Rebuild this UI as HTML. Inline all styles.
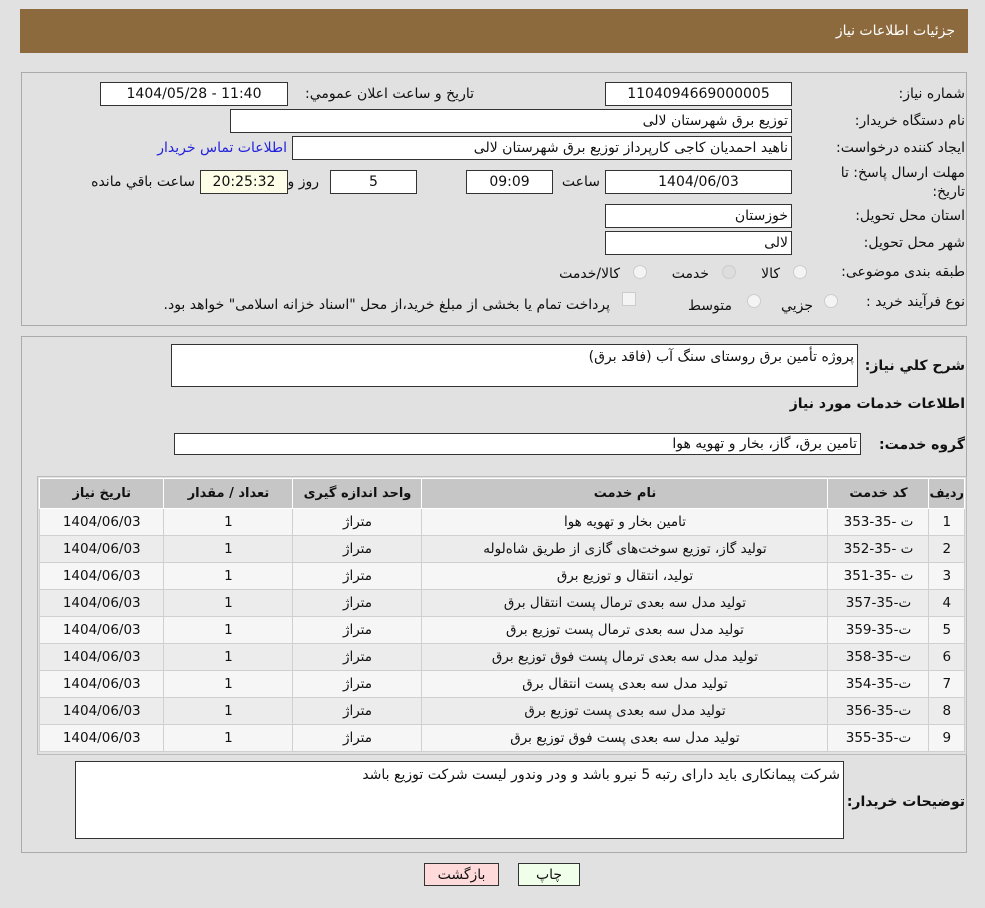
<!DOCTYPE html>
<html><head><meta charset="utf-8"><style>
body{margin:0;width:985px;height:908px;background:#e1e1e1;font-family:"DejaVu Sans","Liberation Sans",sans-serif;font-size:14px;color:#111;position:relative;overflow:hidden}
.a{position:absolute}
.box{position:absolute;background:#fff;border:1px solid #333;box-sizing:border-box;height:24px;line-height:22px;padding:0 3px;white-space:nowrap;overflow:hidden}
.c{text-align:center}.r{text-align:right;direction:rtl}
.lbl{position:absolute;direction:rtl;text-align:right;white-space:nowrap}
.panel{position:absolute;border:1px solid #aaa;box-sizing:border-box}
.rad{position:absolute;width:12px;height:12px;border-radius:50%;border:1px solid #ccc;background:#f4f4f4}
table{position:absolute;left:39px;top:478px;width:926px;border-collapse:collapse;direction:rtl;font-size:13.5px}
td,th{border:1px solid #d0d0d0;text-align:center;height:26px;padding:0}
th{background:#c6c6c6;height:29px;font-weight:bold;border-color:#fff;font-size:13px}
tr:nth-child(even) td{background:#f6f6f6}
tr:nth-child(odd) td{background:#ececec}
</style></head><body>
<div class="a" style="left:20px;top:9px;width:948px;height:44px;background:#8d6a3d;"></div>
<div class="lbl" style="right:30px;top:23px;color:#fff;font-size:14px">جزئیات اطلاعات نیاز</div>

<div class="panel" style="left:21px;top:72px;width:946px;height:254px"></div>
<div class="lbl" style="right:20px;top:86px">شماره نیاز:</div>
<div class="box c" style="left:605px;top:82px;width:187px">1104094669000005</div>
<div class="lbl" style="right:511px;top:86px">تاریخ و ساعت اعلان عمومي:</div>
<div class="box c" style="left:100px;top:82px;width:188px">1404/05/28 - 11:40</div>
<div class="lbl" style="right:20px;top:113px">نام دستگاه خریدار:</div>
<div class="box r" style="left:230px;top:109px;width:562px">توزیع برق شهرستان لالی</div>
<div class="lbl" style="right:20px;top:140px">ایجاد کننده درخواست:</div>
<div class="box r" style="left:292px;top:136px;width:500px">ناهید احمدیان کاجی کارپرداز توزیع برق شهرستان لالی</div>
<div class="lbl" style="right:698px;top:140px;color:#2222dd">اطلاعات تماس خریدار</div>
<div class="lbl" style="right:20px;top:164px;width:155px;line-height:19px;white-space:normal">مهلت ارسال پاسخ: تا تاریخ:</div>
<div class="box c" style="left:605px;top:170px;width:187px">1404/06/03</div>
<div class="lbl" style="right:385px;top:174px">ساعت</div>
<div class="box c" style="left:466px;top:170px;width:87px">09:09</div>
<div class="box c" style="left:330px;top:170px;width:87px">5</div>
<div class="lbl" style="right:666px;top:174px">روز و</div>
<div class="box c" style="left:200px;top:170px;width:88px;background:#fdfde8">20:25:32</div>
<div class="lbl" style="right:790px;top:174px">ساعت باقي مانده</div>
<div class="lbl" style="right:20px;top:208px">استان محل تحویل:</div>
<div class="box r" style="left:605px;top:204px;width:187px">خوزستان</div>
<div class="lbl" style="right:20px;top:235px">شهر محل تحویل:</div>
<div class="box r" style="left:605px;top:231px;width:187px">لالی</div>
<div class="lbl" style="right:20px;top:264px">طبقه بندی موضوعی:</div>
<div class="rad" style="left:793px;top:265px"></div><div class="lbl" style="right:205px;top:266px">کالا</div>
<div class="rad" style="left:722px;top:265px;background:#ddd"></div><div class="lbl" style="right:276px;top:266px">خدمت</div>
<div class="rad" style="left:633px;top:265px"></div><div class="lbl" style="right:365px;top:266px">کالا/خدمت</div>
<div class="lbl" style="right:20px;top:294px">نوع فرآیند خرید :</div>
<div class="rad" style="left:824px;top:294px"></div><div class="lbl" style="right:172px;top:298px">جزيي</div>
<div class="rad" style="left:747px;top:294px"></div><div class="lbl" style="right:253px;top:298px">متوسط</div>
<div class="a" style="left:622px;top:292px;width:12px;height:12px;border:1px solid #ccc;background:#f4f4f4"></div>
<div class="lbl" style="right:375px;top:297px">پرداخت تمام یا بخشی از مبلغ خرید،از محل "اسناد خزانه اسلامی" خواهد بود.</div>

<div class="panel" style="left:21px;top:336px;width:946px;height:517px"></div>
<div class="lbl" style="right:20px;top:358px;font-weight:bold;font-size:14px">شرح کلي نیاز:</div>
<div class="box r" style="left:171px;top:344px;width:687px;height:43px;line-height:24px">پروژه تأمین برق روستای سنگ آب  (فاقد برق)</div>
<div class="lbl" style="right:20px;top:396px;font-weight:bold;font-size:14px">اطلاعات خدمات مورد نیاز</div>
<div class="lbl" style="right:20px;top:437px;font-weight:bold;font-size:14px">گروه خدمت:</div>
<div class="box r" style="left:174px;top:433px;width:687px;height:22px;line-height:20px">تامین برق، گاز، بخار و تهویه هوا</div>
<div class="a" style="left:37px;top:476px;width:930px;height:279px;border:1px solid #bbb;box-sizing:border-box"></div>
<table>
<tr><th style="width:34px">ردیف</th><th style="width:100px">کد خدمت</th><th style="width:405px">نام خدمت</th><th style="width:128px">واحد اندازه گیری</th><th style="width:128px">تعداد / مقدار</th><th>تاریخ نیاز</th></tr>
<tr><td>1</td><td>ت -35-353</td><td>تامین بخار و تهویه هوا</td><td>متراژ</td><td>1</td><td>1404/06/03</td></tr>
<tr><td>2</td><td>ت -35-352</td><td>تولید گاز، توزیع سوخت‌های گازی از طریق شاه‌لوله</td><td>متراژ</td><td>1</td><td>1404/06/03</td></tr>
<tr><td>3</td><td>ت -35-351</td><td>تولید، انتقال و توزیع برق</td><td>متراژ</td><td>1</td><td>1404/06/03</td></tr>
<tr><td>4</td><td>ت-35-357</td><td>تولید مدل سه بعدی ترمال پست انتقال برق</td><td>متراژ</td><td>1</td><td>1404/06/03</td></tr>
<tr><td>5</td><td>ت-35-359</td><td>تولید مدل سه بعدی ترمال پست توزیع برق</td><td>متراژ</td><td>1</td><td>1404/06/03</td></tr>
<tr><td>6</td><td>ت-35-358</td><td>تولید مدل سه بعدی ترمال پست فوق توزیع برق</td><td>متراژ</td><td>1</td><td>1404/06/03</td></tr>
<tr><td>7</td><td>ت-35-354</td><td>تولید مدل سه بعدی پست انتقال برق</td><td>متراژ</td><td>1</td><td>1404/06/03</td></tr>
<tr><td>8</td><td>ت-35-356</td><td>تولید مدل سه بعدی پست توزیع برق</td><td>متراژ</td><td>1</td><td>1404/06/03</td></tr>
<tr><td>9</td><td>ت-35-355</td><td>تولید مدل سه بعدی پست فوق توزیع برق</td><td>متراژ</td><td>1</td><td>1404/06/03</td></tr>
</table>
<div class="lbl" style="right:20px;top:794px;font-weight:bold;font-size:14px">توضیحات خریدار:</div>
<div class="box r" style="left:75px;top:761px;width:769px;height:78px;line-height:26px">شرکت پیمانکاری باید دارای رتبه 5  نیرو باشد و ودر وندور لیست شرکت توزیع باشد</div>

<div class="a" style="left:518px;top:863px;width:62px;height:23px;border:1px solid #333;background:#efffea;text-align:center;line-height:22px;box-sizing:border-box">چاپ</div>
<div class="a" style="left:424px;top:863px;width:75px;height:23px;border:1px solid #333;background:#ffdada;text-align:center;line-height:22px;box-sizing:border-box">بازگشت</div>
</body></html>
